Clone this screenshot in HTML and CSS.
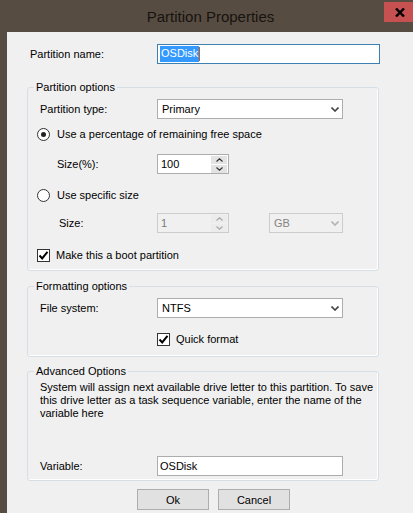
FILE: index.html
```html
<html>
    <head>
        <link rel="stylesheet" href="styles.css">
    </head>
    <body>
        <div class="window">
            <div class="titlebar">
                <span></span>
                <div class="title">Partition Properties</div>
                <div class="close">
                    <svg width="10" height="9" viewBox="0 0 10 9"><path d="M1 0.5 L9 8.5 M9 0.5 L1 8.5" stroke="#000" stroke-width="2.4"/></svg>
                </div>
            </div>
            <div class="client">
                <div class="row name-row">
                    <label class="label">Partition name:</label>
                    <div class="textbox focused name-box"><span class="selected">OSDisk</span><span class="caret"></span></div>
                </div>

                <fieldset class="group options">
                    <legend>Partition options</legend>
                    <div class="row type-row">
                        <label class="label">Partition type:</label>
                        <div class="combo">
                            <span class="combo-text">Primary</span>
                            <svg class="chevron" width="8" height="5" viewBox="0 0 8 5"><path d="M0.5 0.5 L4 4 L7.5 0.5" fill="none" stroke="#444" stroke-width="1.6"/></svg>
                        </div>
                    </div>
                    <div class="choice percent-choice"><span class="radio checked"></span>Use a percentage of remaining free space</div>
                    <div class="row sub-row percent-row">
                        <label class="label">Size(%):</label>
                        <div class="spin">
                            <span class="spin-value">100</span>
                            <div class="spin-buttons">
                                <span class="spin-btn"><svg width="7" height="4" viewBox="0 0 7 4"><path d="M0.5 3.5 L3.5 0.8 L6.5 3.5" fill="none" stroke="#333" stroke-width="1.2"/></svg></span>
                                <span class="spin-btn"><svg width="7" height="4" viewBox="0 0 7 4"><path d="M0.5 0.5 L3.5 3.2 L6.5 0.5" fill="none" stroke="#333" stroke-width="1.2"/></svg></span>
                            </div>
                        </div>
                    </div>
                    <div class="choice specific-choice"><span class="radio"></span>Use specific size</div>
                    <div class="row sub-row size-row">
                        <label class="label size-label">Size:</label>
                        <div class="spin disabled">
                            <span class="spin-value">1</span>
                            <div class="spin-buttons">
                                <span class="spin-btn"><svg width="7" height="4" viewBox="0 0 7 4"><path d="M0.5 3.5 L3.5 0.8 L6.5 3.5" fill="none" stroke="#a8a8a8" stroke-width="1.2"/></svg></span>
                                <span class="spin-btn"><svg width="7" height="4" viewBox="0 0 7 4"><path d="M0.5 0.5 L3.5 3.2 L6.5 0.5" fill="none" stroke="#a8a8a8" stroke-width="1.2"/></svg></span>
                            </div>
                        </div>
                        <div class="combo unit disabled">
                            <span class="combo-text">GB</span>
                            <svg class="chevron" width="8" height="5" viewBox="0 0 8 5"><path d="M0.5 0.5 L4 4 L7.5 0.5" fill="none" stroke="#b4b4b4" stroke-width="1.6"/></svg>
                        </div>
                    </div>
                    <div class="choice boot-choice">
                        <span class="checkbox"><svg width="11" height="11" viewBox="0 0 11 11"><path d="M1.5 5.5 L4.2 8.4 L9.5 1.8" fill="none" stroke="#000" stroke-width="2"/></svg></span>Make this a boot partition
                    </div>
                </fieldset>

                <fieldset class="group formatting">
                    <legend>Formatting options</legend>
                    <div class="row type-row">
                        <label class="label">File system:</label>
                        <div class="combo">
                            <span class="combo-text">NTFS</span>
                            <svg class="chevron" width="8" height="5" viewBox="0 0 8 5"><path d="M0.5 0.5 L4 4 L7.5 0.5" fill="none" stroke="#444" stroke-width="1.6"/></svg>
                        </div>
                    </div>
                    <div class="choice quick-choice">
                        <span class="checkbox"><svg width="11" height="11" viewBox="0 0 11 11"><path d="M1.5 5.5 L4.2 8.4 L9.5 1.8" fill="none" stroke="#000" stroke-width="2"/></svg></span>Quick format
                    </div>
                </fieldset>

                <fieldset class="group advanced">
                    <legend>Advanced Options</legend>
                    <p class="note">System will assign next available drive letter to this partition. To save<br>this drive letter as a task sequence variable, enter the name of the<br>variable here</p>
                    <div class="row variable-row">
                        <label class="label">Variable:</label>
                        <div class="textbox variable-box">OSDisk</div>
                    </div>
                </fieldset>

                <div class="buttons">
                    <button class="btn">Ok</button>
                    <button class="btn">Cancel</button>
                </div>
            </div>
        </div>
    </body>
</html>
```

FILE: styles.css
```css
body {
    margin: 0;
    font-family: "Liberation Sans", Arial, sans-serif;
    font-size: 11px;
    color: #000;
    background: #574c41;
}
.window {
    width: 413px;
    height: 513px;
    overflow: hidden;
}

/* title bar */
.titlebar {
    height: 32px;
    display: grid;
    grid-template-columns: 1fr auto 1fr;
    align-items: start;
}
.title {
    font-size: 15px;
    line-height: 33px;
    color: #161310;
    padding-left: 8px;
}
.close {
    justify-self: end;
    margin-top: 2px;
    width: 29px;
    height: 20px;
    background: #c75050;
    display: flex;
    align-items: center;
    justify-content: center;
    padding-left: 3px;
    box-sizing: border-box;
}

/* dialog body */
.client {
    margin-left: 7px;
    height: 481px;
    background: #f0f0f0;
    padding-top: 12px;
    box-sizing: border-box;
}
.row {
    display: flex;
    align-items: center;
}
.label {
    flex: none;
}
.name-row {
    padding-left: 23px;
}
.name-row .label {
    width: 127px;
}

.textbox, .combo, .spin {
    height: 20px;
    box-sizing: border-box;
    border: 1px solid #adadad;
    background: #fff;
    display: flex;
    align-items: center;
}
.textbox {
    padding-left: 2px;
}
.textbox.focused {
    border-color: #3c7fb1;
}
.name-box {
    width: 223px;
}
.selected {
    background: #3399ff;
    color: #fff;
    padding: 1px 1px 2px 1px;
    line-height: 13px;
}
.caret {
    width: 1px;
    height: 14px;
    background: #c06020;
}

/* group boxes */
.group {
    margin: 0 0 0 20px;
    width: 352px;
    box-sizing: border-box;
    padding: 0;
    border: 1px solid #d5dfe5;
    border-radius: 3px;
    box-shadow: inset -1px -1px 0 #fff;
    min-inline-size: 0;
}
.group legend {
    margin-left: 6px;
    padding: 0 2px;
    line-height: 13px;
}
.group .row {
    padding-left: 12px;
}
.group .label {
    width: 117px;
}
.options {
    margin-top: 17px;
    padding-bottom: 7px;
}
.formatting {
    margin-top: 9px;
    padding-bottom: 9px;
}
.advanced {
    margin-top: 8px;
    padding-bottom: 4px;
}

.type-row {
    margin-top: 5px;
}
.combo {
    width: 186px;
    padding: 0 3px 0 4px;
    justify-content: space-between;
}
.combo.disabled {
    background: #f0f0f0;
    border-color: #cccccc;
    color: #838383;
}
.unit {
    width: 74px;
    margin-left: 40px;
}

/* radio buttons and check boxes */
.choice {
    display: flex;
    align-items: center;
    height: 16px;
    padding-left: 9px;
}
.radio, .checkbox {
    flex: none;
    width: 13px;
    height: 13px;
    box-sizing: border-box;
    border: 1px solid #333;
    background: #fff;
    margin-right: 7px;
    display: flex;
    align-items: center;
    justify-content: center;
}
.radio {
    border-radius: 50%;
}
.radio.checked::after {
    content: "";
    width: 5px;
    height: 5px;
    border-radius: 50%;
    background: #222;
}
.checkbox {
    margin-right: 6px;
}
.percent-choice {
    margin-top: 7px;
}
.specific-choice {
    margin-top: 13px;
}
.boot-choice {
    margin-top: 14px;
}
.quick-choice {
    margin-top: 13px;
    padding-left: 129px;
}

.group .sub-row {
    padding-left: 29px;
}
.group .sub-row .label {
    width: 100px;
}
.group .sub-row .size-label {
    width: 98px;
    padding-left: 2px;
}
.percent-row {
    margin-top: 12px;
}
.size-row {
    margin-top: 10px;
}
.spin {
    width: 72px;
    padding-left: 2px;
    justify-content: space-between;
}
.spin-value {
    padding-left: 1px;
}
.spin-buttons {
    display: flex;
    flex-direction: column;
    gap: 1px;
    padding-right: 1px;
}
.spin-btn {
    width: 16px;
    height: 8px;
    background: #e3e3e3;
    display: flex;
    align-items: center;
    justify-content: center;
}
.spin.disabled {
    background: #f0f0f0;
    border-color: #cccccc;
    color: #7a7a7a;
}
.spin.disabled .spin-btn {
    background: #ececec;
}

.note {
    margin: 3px 0 0 12px;
    line-height: 13px;
}
.variable-row {
    margin-top: 36px;
}
.variable-box {
    width: 186px;
}

/* dialog buttons */
.buttons {
    display: flex;
    justify-content: center;
    gap: 9px;
    padding-left: 7px;
    margin-top: 8px;
}
.btn {
    width: 72px;
    height: 21px;
    font-family: "Liberation Sans", Arial, sans-serif;
    font-size: 11px;
    color: #000;
    background: #e1e1e1;
    border: 1px solid #adadad;
    padding: 0;
}
```
